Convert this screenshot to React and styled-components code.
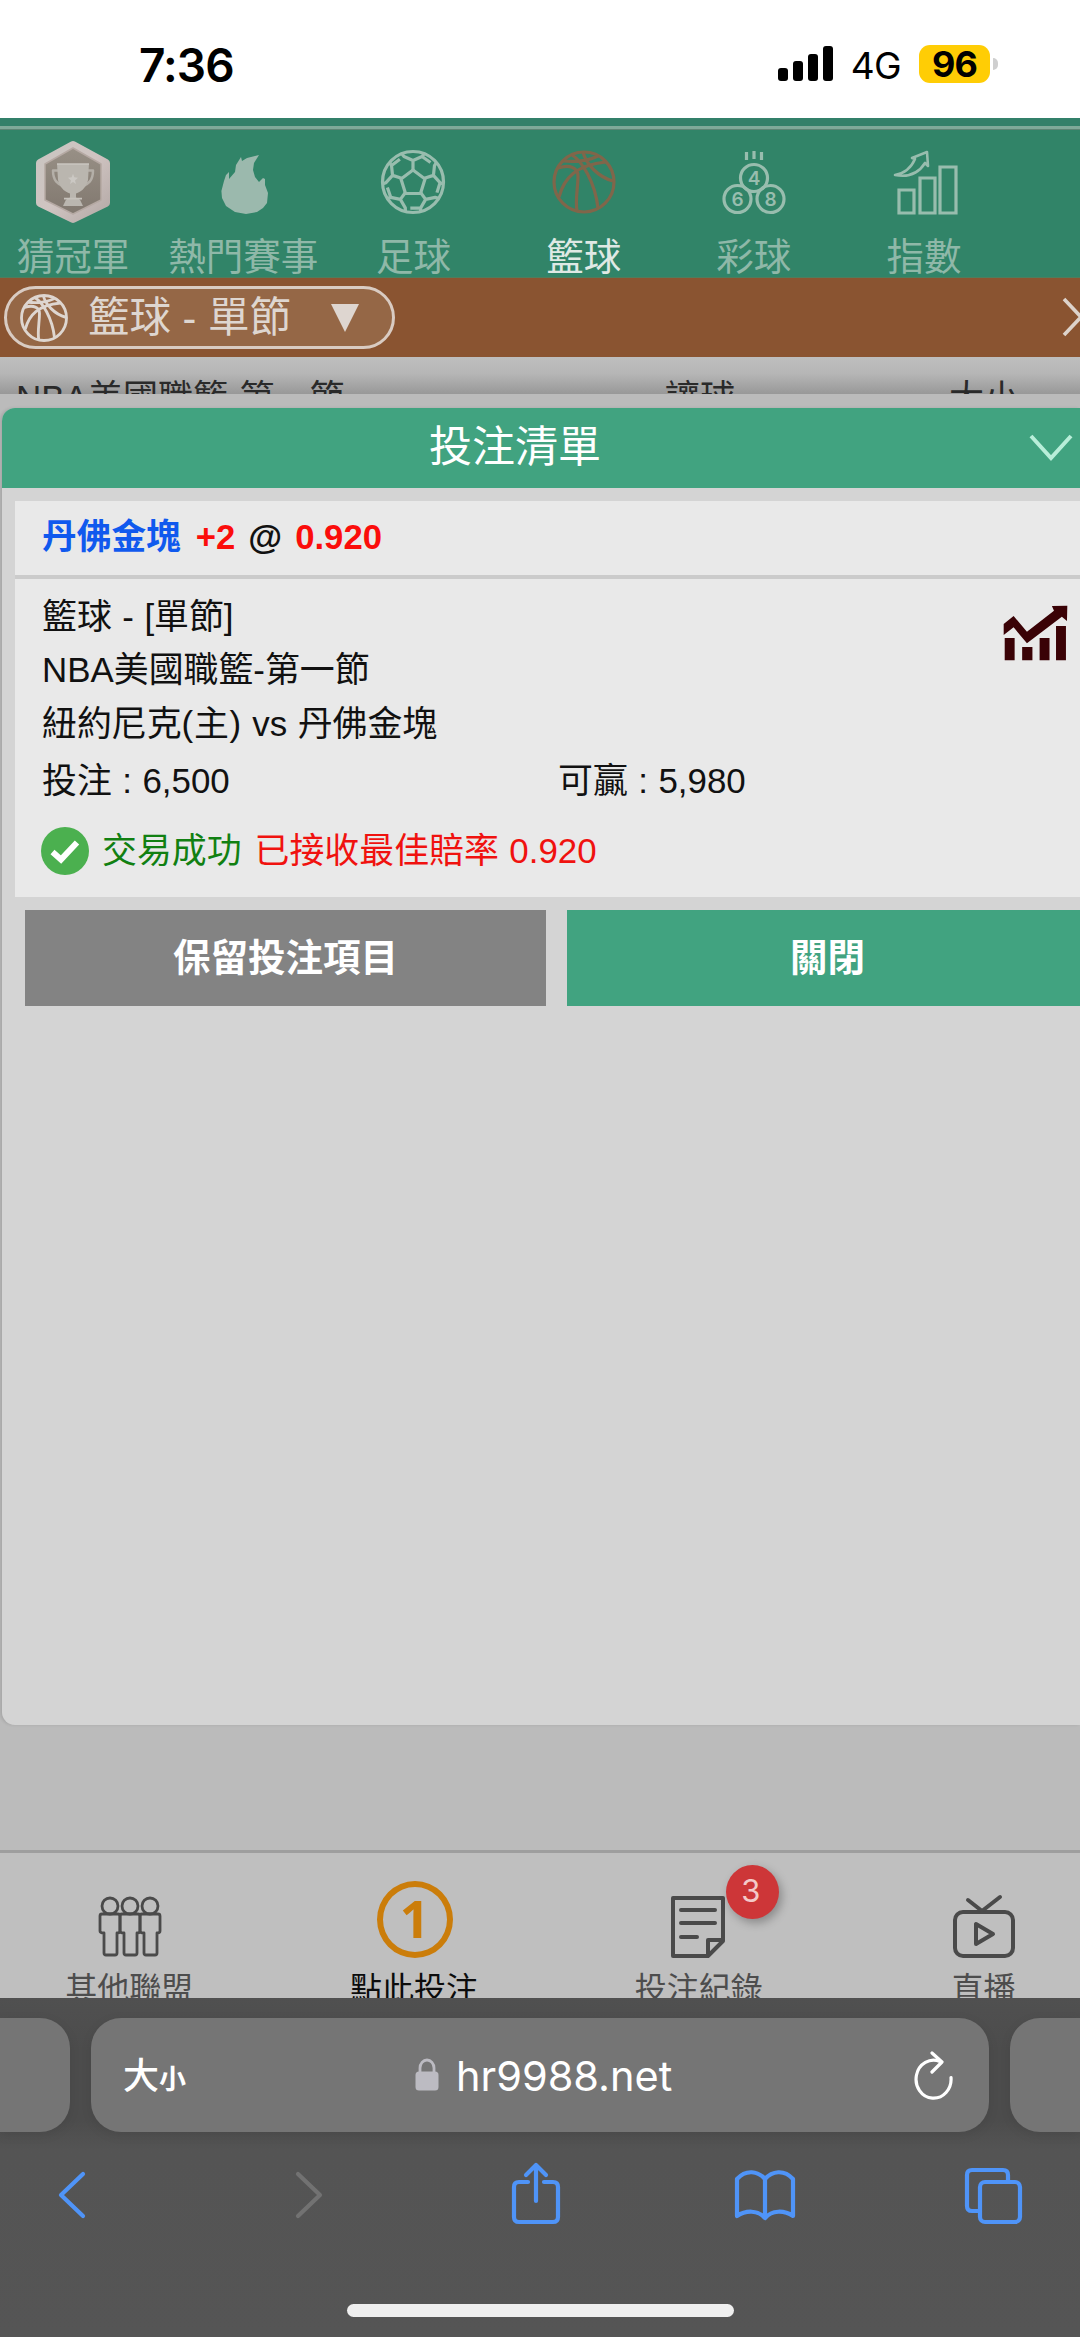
import React, { useState } from "react";
import styled, { createGlobalStyle, css } from "styled-components";

const COLOR = {
	green: "#41a380",
	greenDim: "#318468",
	brown: "#8a5431",
	label: "#8fb8a8",
	labelActive: "#dfe9e4",
	icon: "#4a4a4a",
	blue: "#4f94f8",
};

const GlobalStyle = createGlobalStyle`
	* {
		box-sizing: border-box;
	}
	body {
		margin: 0;
		line-height: 1.15;
		font-family: "Liberation Sans", "Noto Sans CJK TC", sans-serif;
	}
`;

const Viewport = styled.div`
	width: 1080px;
	height: 2337px;
	overflow: hidden;
	display: flex;
	flex-direction: column;
	background-color: #bbbbbb;
`;

/* ---------- status bar ---------- */

const StatusBar = styled.div`
	flex: none;
	height: 118px;
	padding: 9px 82px 0 139px;
	display: flex;
	align-items: center;
	background-color: #ffffff;
	font-family: Inter, sans-serif;
	color: #000;
`;
const Clock = styled.div`
	flex: 1;
	padding-top: 3px;
	font-size: 46px;
	font-weight: 600;
	letter-spacing: -0.9px;
`;
const Network = styled.div`
	margin: 5px 18px 0 17px;
	font-size: 37px;
	letter-spacing: -0.6px;
`;
const Battery = styled.div`
	width: 71px;
	height: 38px;
	border-radius: 11px;
	background-color: #ffcd05;
	font-size: 36px;
	line-height: 38px;
	font-weight: 700;
	letter-spacing: -1px;
	text-align: center;
`;
const BatteryTip = styled.div`
	width: 5px;
	height: 12px;
	margin-left: 3px;
	border-radius: 0 5px 5px 0;
	background-color: #cfcfcf;
`;

/* ---------- sport tabs ---------- */

const SportNav = styled.div`
	flex: none;
	height: 160px;
	background-color: ${COLOR.greenDim};
	border-bottom: 1px solid #4f7d5c;
`;
const NavRule = styled.div`
	height: 12px;
	border-top: 8px solid #33806a;
	background-color: #7fa99a;
	border-bottom: 1px solid #5d8576;
`;
const SportList = styled.div`
	display: flex;
	margin-left: -12px;
	padding-top: 8px;
`;
const SportItem = styled.div`
	flex: none;
	width: 170.2px;
	display: flex;
	flex-direction: column;
	align-items: center;
	color: #98bdae;

	span {
		font-size: 37.5px;
		line-height: 58px;
		white-space: nowrap;
		color: ${(props) => (props.$active ? COLOR.labelActive : COLOR.label)};
	}
`;
const SportIcon = styled.svg`
	width: 82px;
	height: 90px;
	fill: none;
	stroke: currentColor;
	stroke-width: 3.2;
	stroke-linejoin: round;
`;

/* ---------- league picker ---------- */

const LeagueBar = styled.div`
	flex: none;
	height: 79px;
	padding: 8px 0 0 4px;
	display: flex;
	justify-content: space-between;
	align-items: flex-start;
	background-color: ${COLOR.brown};
	overflow: hidden;
`;
const LeaguePill = styled.div`
	width: 391px;
	height: 63px;
	padding-left: 13px;
	display: flex;
	align-items: center;
	border: 3px solid #d9cbc2;
	border-radius: 32px;
	background-color: #956746;
	color: #ded6d0;
	font-size: 41.5px;

	span {
		margin: 0 40px 0 20px;
		line-height: 48px;
		white-space: nowrap;
	}
`;
const MoreArrow = styled.svg`
	flex: none;
	width: 19px;
	height: 42px;
	margin-top: 10px;
`;

const OddsHead = styled.div`
	flex: none;
	height: 37px;
	overflow: hidden;
	display: flex;
	background: linear-gradient(#bebebe, #b6b6b6 45%, #989898);
	color: #2a2a2a;
	font-size: 35px;
	line-height: 40px;
	padding-top: 21px;
`;
const OddsCell = styled.div`
	flex: none;
	width: ${(props) => props.$width}px;
	padding-left: ${(props) => props.$pad}px;
	white-space: nowrap;
`;

/* ---------- bet slip ---------- */

const Slip = styled.div`
	flex: none;
	height: 1317px;
	margin: 14px 0 0 2px;
	border-radius: 13px 0 0 13px;
	overflow: hidden;
	background-color: #d4d4d4;
	box-shadow: -2px 0 3px rgba(0, 0, 0, 0.1);
`;
const SlipHead = styled.div`
	height: 80px;
	padding: 0 6px 2px 0;
	display: flex;
	align-items: center;
	background-color: ${COLOR.green};
	color: #fff;
	font-size: 43px;
	line-height: 50px;
`;
const SlipTitle = styled.div`
	flex: 1;
	text-align: center;
`;
const Card = styled.div`
	height: 396px;
	margin: 13px 0 0 13px;
	background-color: #e9e9e9;
	font-size: 34.9px;
	word-spacing: 0.8px;
	color: #111;
`;
const Pick = styled.div`
	height: 78px;
	padding: 0 0 3px 27px;
	display: flex;
	align-items: center;
	gap: 13px;
	border-bottom: 4px solid #cbcbcb;
	font-weight: 700;
	font-size: 34.7px;
	line-height: 40px;

	em {
		font-style: normal;
		color: #fb0d0b;
	}
`;
const Team = styled.div`
	margin-right: 2px;
	color: #1059ee;
`;
const Match = styled.div`
	display: flex;
	justify-content: space-between;
	padding: 11px 12px 0 27px;
	line-height: 53.3px;
`;
const HomeMark = styled.span`
	letter-spacing: 0.7px;
`;
const TrendIcon = styled.svg`
	width: 65px;
	height: 56px;
	margin-top: 15px;
`;
const Amounts = styled.div`
	display: grid;
	grid-template-columns: 516px 1fr;
	padding-left: 27px;
	line-height: 62px;
`;
const Result = styled.div`
	height: 78px;
	padding-left: 26px;
	display: flex;
	align-items: center;
	line-height: 40px;
	color: #f0120f;

	svg {
		width: 48px;
		height: 48px;
	}
	span {
		margin: 0 13px 0 13px;
		color: #118012;
	}
`;
const Actions = styled.div`
	display: grid;
	grid-template-columns: 521px 521px;
	gap: 21px;
	padding: 13px 0 0 23px;
`;
const ActionButton = styled.button`
	height: 96px;
	border: 0;
	padding: 0;
	background-color: ${(props) => (props.$primary ? COLOR.green : "#838383")};
	color: #fff;
	font: 700 37.5px/44px "Liberation Sans", "Noto Sans CJK TC", sans-serif;
`;

/* ---------- site footer ---------- */

const FootNav = styled.div`
	flex: none;
	height: 148px;
	margin-top: 125px;
	padding-left: 2px;
	margin-left: -15px;
	overflow: hidden;
	display: flex;
	border-top: 3px solid #9e9e9e;
	background-color: #bfbfbf;
`;
const FootItem = styled.div`
	flex: none;
	width: 284.7px;
	padding-top: 25px;
	display: flex;
	flex-direction: column;
	align-items: center;
	color: ${(props) => (props.$active ? "#0c0c0c" : "#4d4d4d")};
	font-size: 32px;

	span {
		flex: none;
		line-height: 44px;
		margin-top: 5px;
	}
`;
const FootIcon = styled.div`
	flex: none;
	position: relative;
	display: flow-root;
	width: 80px;
	height: 84px;
	margin-left: 1px;

	svg {
		display: block;
		fill: none;
		stroke: ${COLOR.icon};
		stroke-linejoin: round;
		stroke-linecap: round;
	}
`;
const Count = styled.div`
	position: absolute;
	left: 67px;
	top: -13px;
	width: 53px;
	height: 54px;
	border-radius: 50%;
	background-color: #cd3638;
	box-shadow: 3px 4px 10px rgba(0, 0, 0, 0.28);
	color: #f3c9c9;
	font: 400 31px/51px Inter, sans-serif;
	text-align: center;
	padding-right: 4px;
`;
const Coin = styled.div`
	width: 76px;
	height: 77px;
	margin: 3px 2px 0;
	border: 6px solid #cb7d0a;
	border-radius: 50%;
	color: #cb7d0a;
	font: 700 52px/62px "Open Sans", sans-serif;
	text-align: center;
`;

/* ---------- browser chrome ---------- */

const Browser = styled.div`
	flex: 1;
	background: linear-gradient(#505050, #4c4c4c 15%, #4c4c4c 36%, #545454 45%, #555555);
	font-family: Inter, "Noto Sans CJK TC", sans-serif;
`;
const Tabs = styled.div`
	display: grid;
	grid-template-columns: 70px 898px 70px;
	gap: 21px;
	height: 134px;
	padding-top: 20px;
`;
const barFill = css`
	background-color: #757575;
	box-shadow: 0 3px 12px rgba(0, 0, 0, 0.08);
`;
const SideTab = styled.div`
	${barFill}
	border-radius: ${(props) => (props.$left ? "0 30px 30px 0" : "30px 0 0 30px")};
`;
const AddressBar = styled.div`
	${barFill}
	border-radius: 30px;
	padding: 0 36px 0 32px;
	display: flex;
	align-items: center;
	color: #fff;
`;
const TextSize = styled.div`
	width: 292px;
	padding-top: 5px;
	font-size: 36px;
	font-weight: 500;
	line-height: 50px;

	small {
		font-size: 27px;
		font-weight: 700;
	}
`;
const Url = styled.div`
	flex: 1;
	margin-left: 17px;
	padding-top: 1px;
	font-size: 41.5px;
	line-height: 50px;
`;
const Toolbar = styled.div`
	display: flex;
	height: 172px;
	padding: 26px 54px 0 55px;
	justify-content: space-between;
	align-items: flex-start;
`;
const ToolIcon = styled.svg`
	width: 72px;
	height: 72px;
	fill: none;
	stroke: ${(props) => (props.$disabled ? "#727272" : COLOR.blue)};
	stroke-width: 4.2;
	stroke-linejoin: round;
	stroke-linecap: round;
`;
const HomeIndicator = styled.div`
	width: 387px;
	height: 13px;
	border-radius: 7px;
	margin: 0 auto;
	background-color: #efefef;
`;

const Trophy = () => (
	<SportIcon viewBox="-41 -45 82 90">
		<defs>
			<linearGradient id="badge" x1="0" y1="0" x2="1" y2="1">
				<stop offset="0" stopColor="#c9c5c1" />
				<stop offset="0.5" stopColor="#cfc4c1" />
				<stop offset="1" stopColor="#b5aaa7" />
			</linearGradient>
			<linearGradient id="badgeIn" x1="0" y1="0" x2="0" y2="1">
				<stop offset="0" stopColor="#989086" />
				<stop offset="1" stopColor="#81786f" />
			</linearGradient>
		</defs>
		<path d="M0 -38L33 -20V20L0 36L-33 20V-20Z" fill="url(#badge)" stroke="url(#badge)" strokeWidth="8" />
		<path d="M0 -35L28 -19V17L0 31L-28 17V-19Z" fill="url(#badgeIn)" stroke="#b5a9a3" strokeWidth="1.5" />
		<g transform="scale(1 1.04)">
			<path d="M-15 -12H-20C-20 -2 -15 1 -10 3M15 -12H20C20 -2 15 1 10 3" stroke="#b4afa8" style={{ strokeWidth: 2.5 }} />
			<path d="M-16 -19H16L15 -3C13 6 6 9 3 10V14L7 16L10 22H-10L-7 16L-3 14V10C-6 9 -13 6 -15 -3Z" fill="#bab6af" stroke="none" />
			<path d="M-16 -18H16M-9 15H9" stroke="#c6c2bc" strokeWidth="1.5" />
			<path d="M0 -9L1.3 -5.500L5 -5L2 -2.500L3 1L0 -1L-3 1L-2 -2.500L-5 -5L-1.3 -5.500Z" fill="#cbc8c3" stroke="none" />
		</g>
	</SportIcon>
);

const Flame = () => (
	<SportIcon viewBox="-41 -45 82 90">
		<path
			fill="#9bb9ad"
			stroke="none"
			d="M16 -28L11 -20L10 -13L12 -6L16 -1L20 -5L22 -4L22 2L25 10L24 20L20 25L14 29L3 31L-8 29L-17 23L-21 15L-21.6 8L-19 -2L-17 -8L-14 -11L-14 -4L-8 -11L-7 -18L-2 -26L-1 -22L4 -25Z"
		/>
	</SportIcon>
);

const Football = () => (
	<SportIcon viewBox="-41 -44 82 90">
		<circle r="30.5" />
		<path d="M0 -12L12 -3L7.5 11.5H-7.5L-12 -3Z" />
		{[0, 72, 144, 216, 288].map((deg) => (
			<path key={deg} transform={`rotate(${deg})`} d="M0 -12V-21.5M-11 -28L-9 -25.5L0 -21.5L9 -25.5L11 -28M9 -25.5L17.5 -19.5" />
		))}
	</SportIcon>
);

const ballLines = (
	<>
		<circle r="30" />
		<path d="M-12 -27C-2 -21 11 0 14 26M-1 -30C2 -18 14 -5 29 -1M-26 -14C-14 -18 -6 -14 -6 -6C-6 6 -9 18 -7 29M-25 15C-20 -4 -8 -17 22 -20M-21 -21C-10 -20 4 -21 14 -26" />
	</>
);

const Lottery = () => (
	<SportIcon viewBox="-41 -44 82 90">
		<path d="M-7.5 -30V-22M0 -31V-23M7.5 -30V-22" />
		<circle cy="-4" r="13.5" />
		<circle cx="-16.5" cy="17" r="13.5" />
		<circle cx="16.5" cy="17" r="13.5" />
		<g fill="currentColor" stroke="none" fontFamily="Inter" fontSize="19" fontWeight="600" textAnchor="middle">
			<text y="3">4</text>
			<text x="-16.5" y="24">6</text>
			<text x="16.5" y="24">8</text>
		</g>
	</SportIcon>
);

const IndexChart = () => (
	<SportIcon viewBox="-41 -44 82 90">
		<path d="M-25 8H-10V31H-25ZM-4 -4H11V31H-4ZM16 -15H32V31H16Z" strokeLinejoin="miter" />
		<path d="M-29 -7C-18 -9 -12 -16 -9 -23L-12 -24L3 -30L4 -16L1 -19C-4 -11 -13 -4 -29 -7Z" strokeWidth="2.6" />
	</SportIcon>
);

const Basketball = () => (
	<SportIcon viewBox="-41 -44 82 90" color="#80664a">
		{ballLines}
	</SportIcon>
);

const SPORTS = [
	{ name: "猜冠軍", icon: <Trophy /> },
	{ name: "熱門賽事", icon: <Flame /> },
	{ name: "足球", icon: <Football /> },
	{ name: "籃球", icon: <Basketball /> },
	{ name: "彩球", icon: <Lottery /> },
	{ name: "指數", icon: <IndexChart /> },
];

const FOOTER = [
	{
		name: "其他聯盟",
		icon: (
			<svg width="80" height="84" strokeWidth="2.8">
				{[20, 40, 60].map((x) => (
					<g key={x} transform={`translate(${x} 0)`}>
						<circle cy="28" r="8" />
						<path d="M-8 36H8Q10 36 10 38V53Q10 55 7 55V75Q7 77 5 77H-4Q-6 77 -6 75V55Q-10 55 -10 53V38Q-10 36 -8 36Z" />
					</g>
				))}
			</svg>
		),
	},
	{ name: "點此投注", icon: <Coin>1</Coin> },
	{
		name: "投注紀錄",
		count: 3,
		icon: (
			<svg width="80" height="84" strokeWidth="4">
				<path d="M14 20H64V63L49 78H14ZM49 78V62H64M22 32H56M22 45H56M22 59H38" />
			</svg>
		),
	},
	{
		name: "直播",
		icon: (
			<svg width="80" height="84" strokeWidth="4">
				<rect x="11" y="34" width="58" height="44" rx="8" />
				<path d="M24 22L38 33L56 19M32 46V66L49 56Z" />
			</svg>
		),
	},
];

const App = () => {
	const [sport, setSport] = useState("籃球");

	return (
		<Viewport>
			<GlobalStyle />
			<StatusBar>
				<Clock>7:36</Clock>
				<svg width="56" height="36">
					<rect x="0" y="22" width="10" height="13" rx="3" />
					<rect x="15" y="15" width="10" height="20" rx="3" />
					<rect x="30" y="8" width="10" height="27" rx="3" />
					<rect x="45" y="0" width="10" height="35" rx="3" />
				</svg>
				<Network>4G</Network>
				<Battery>96</Battery>
				<BatteryTip />
			</StatusBar>

			<SportNav>
				<NavRule />
				<SportList>
					{SPORTS.map((item) => (
						<SportItem key={item.name} $active={item.name === sport} onClick={() => setSport(item.name)}>
							{item.icon}
							<span>{item.name}</span>
						</SportItem>
					))}
				</SportList>
			</SportNav>

			<LeagueBar>
				<LeaguePill>
					<svg width="48" height="48" viewBox="-32 -32 64 64" fill="none" stroke="currentColor" strokeWidth="3.8">
						{ballLines}
					</svg>
					<span>籃球 - 單節</span>
					<svg width="28" height="28">
						<path d="M0 0H28L14 28Z" fill="currentColor" />
					</svg>
				</LeaguePill>
				<MoreArrow viewBox="0 0 19 42">
					<path d="M3 3L20 21L3 39" fill="none" stroke="#ddd3cb" strokeWidth="3.6" />
				</MoreArrow>
			</LeagueBar>
			<OddsHead>
				<OddsCell $width={557} $pad={16}>NBA美國職籃-第一節</OddsCell>
				<OddsCell $width={285} $pad={108}>讓球</OddsCell>
				<OddsCell $width={238} $pad={107}>大小</OddsCell>
			</OddsHead>

			<Slip>
				<SlipHead>
					<SlipTitle>投注清單</SlipTitle>
					<svg width="46" height="30">
						<path d="M3 4L23 26L43 4" fill="none" stroke="#b8eed9" strokeWidth="4" />
					</svg>
				</SlipHead>
				<Card>
					<Pick>
						<Team>丹佛金塊</Team>
						<em>+2</em>
						<div>@</div>
						<em>0.920</em>
					</Pick>
					<Match>
						<div>
							<div>籃球 - [單節]</div>
							<div>NBA美國職籃-第一節</div>
							<div>
								紐約尼克<HomeMark>(主)</HomeMark> vs 丹佛金塊
							</div>
						</div>
						<TrendIcon viewBox="0 0 190 168" preserveAspectRatio="none" fill="#3a0206">
							<path d="M2 57L31 33L70 80L149 17L143 3L188 2L187 48L172 35L70 115L31 67L2 90Z" />
							<path d="M5 99H34V166H5ZM56 126H86V166H56ZM107 99H136V166H107ZM155 63H184V166H155Z" />
						</TrendIcon>
					</Match>
					<Amounts>
						<div>投注 : 6,500</div>
						<div>可贏 : 5,980</div>
					</Amounts>
					<Result>
						<svg viewBox="0 0 48 48">
							<circle cx="24" cy="24" r="24" fill="#4bb04f" />
							<path d="M11.5 25L20 32.5L36 15.5" fill="none" stroke="#fff" strokeWidth="6" />
						</svg>
						<span>交易成功</span>
						已接收最佳賠率 0.920
					</Result>
				</Card>
				<Actions>
					<ActionButton>保留投注項目</ActionButton>
					<ActionButton $primary>關閉</ActionButton>
				</Actions>
			</Slip>

			<FootNav>
				{FOOTER.map((item) => (
					<FootItem key={item.name} $active={item.name === "點此投注"}>
						<FootIcon>
							{item.icon}
							{item.count && <Count>{item.count}</Count>}
						</FootIcon>
						<span>{item.name}</span>
					</FootItem>
				))}
			</FootNav>

			<Browser>
				<Tabs>
					<SideTab $left />
					<AddressBar>
						<TextSize>
							大<small>小</small>
						</TextSize>
						<svg width="24" height="34">
							<path d="M5 15V10A7 8 0 0 1 19 10V15" fill="none" stroke="#bcbbc2" strokeWidth="2.8" />
							<rect x="0.5" y="13.5" width="23" height="19" rx="3.5" fill="#bcbbc2" />
						</svg>
						<Url>hr9988.net</Url>
						<svg width="40" height="50" fill="none" stroke="#fff" strokeWidth="3.2" strokeLinecap="round" strokeLinejoin="round">
							<path d="M38 27.5A17.500 19 0 1 1 27 11.500M19 3L29 12L19 22" />
						</svg>
					</AddressBar>
					<SideTab />
				</Tabs>
				<Toolbar>
					<ToolIcon viewBox="0 0 72 72">
						<path d="M28 16L6 37L28 58" />
					</ToolIcon>
					<ToolIcon viewBox="0 0 72 72" $disabled>
						<path d="M18 16L40 37L18 58" />
					</ToolIcon>
					<ToolIcon viewBox="0 0 72 72">
						<path d="M23 24H14Q9 24 9 29V59Q9 64 14 64H48Q53 64 53 59V29Q53 24 48 24H39M31 43V8M21 17L31 7L41 17" />
					</ToolIcon>
					<ToolIcon viewBox="0 0 72 72">
						<path d="M36 60C29 52 17 52 8 58V21C17 11 29 13 36 21C43 13 55 11 64 21V58C55 52 43 52 36 60ZM36 21V60" />
					</ToolIcon>
					<ToolIcon viewBox="0 0 72 72">
						<path d="M54 22V17Q54 12 49 12H18Q13 12 13 17V48Q13 53 18 53H26" />
						<rect x="26" y="24" width="40" height="40" rx="5" />
					</ToolIcon>
				</Toolbar>
				<HomeIndicator />
			</Browser>
		</Viewport>
	);
};

export default App;
